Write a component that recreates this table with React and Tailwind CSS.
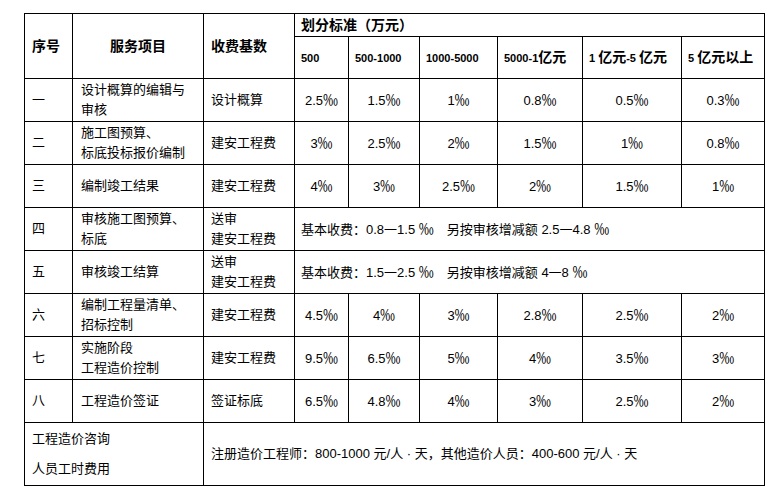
const cols = [48, 131, 91, 54, 71, 78, 85, 99, 83];

const rows = [
  { no: "一", item: ["设计概算的编辑与", "审核"], base: ["设计概算"], rates: ["2.5‰", "1.5‰", "1‰", "0.8‰", "0.5‰", "0.3‰"] },
  { no: "二", item: ["施工图预算、", "标底投标报价编制"], base: ["建安工程费"], rates: ["3‰", "2.5‰", "2‰", "1.5‰", "1‰", "0.8‰"] },
  { no: "三", item: ["编制竣工结果"], base: ["建安工程费"], rates: ["4‰", "3‰", "2.5‰", "2‰", "1.5‰", "1‰"] },
  { no: "四", item: ["审核施工图预算、", "标底"], base: ["送审", "建安工程费"], note: "基本收费：0.8一1.5 ‰\u3000另按审核增减额 2.5一4.8 ‰" },
  { no: "五", item: ["审核竣工结算"], base: ["送审", "建安工程费"], note: "基本收费：1.5一2.5 ‰\u3000另按审核增减额 4一8 ‰" },
  { no: "六", item: ["编制工程量清单、", "招标控制"], base: ["建安工程费"], rates: ["4.5‰", "4‰", "3‰", "2.8‰", "2.5‰", "2‰"] },
  { no: "七", item: ["实施阶段", "工程造价控制"], base: ["建安工程费"], rates: ["9.5‰", "6.5‰", "5‰", "4‰", "3.5‰", "3‰"] },
  { no: "八", item: ["工程造价签证"], base: ["签证标底"], rates: ["6.5‰", "4.8‰", "4‰", "3‰", "2.5‰", "2‰"] },
];

// header ranges: digits small, CJK larger
const ranges = [
  [["500", false]],
  [["500-1000", false]],
  [["1000-5000", false]],
  [["5000-1", false], ["亿元", true]],
  [["1 ", false], ["亿元", true], ["-5 ", false], ["亿元", true]],
  [["5 ", false], ["亿元以上", true]],
];

const font = { fontFamily: '"Liberation Sans", "Noto Sans CJK SC", sans-serif' };

// render ‰ larger, as in the reference
const Permil = ({ text }) =>
  text.split("‰").map((part, i, arr) => (
    <span key={i}>
      {part}
      {i < arr.length - 1 && (
        <span className="text-[15px] leading-[20px]" style={{ fontFamily: '"Noto Sans CJK SC", sans-serif' }}>
          ‰
        </span>
      )}
    </span>
  ));

const App = () => {
  return (
    <div className="w-[779px] h-[503px] bg-white pt-[13px] pl-[24px] text-black" style={font}>
      <table className="table-fixed border-collapse w-[741px] text-[13px] leading-[20px]">
        <colgroup>
          {cols.map((w, i) => (
            <col key={i} style={{ width: w }} />
          ))}
        </colgroup>
        <thead>
          <tr className="h-[23px]">
            <th rowSpan={2} className="border border-black text-left pl-[7px] text-[14px] font-bold align-middle">
              序号
            </th>
            <th rowSpan={2} className="border border-black text-center text-[14px] font-bold align-middle">
              服务项目
            </th>
            <th rowSpan={2} className="border border-black text-left pl-[7px] text-[14px] font-bold align-middle">
              收费基数
            </th>
            <th colSpan={6} className="border border-black text-left pl-[6px] text-[14px] font-bold">
              划分标准（万元）
            </th>
          </tr>
          <tr className="h-[42px]">
            {ranges.map((r, i) => (
              <th key={i} className="border border-black text-left pl-[6px] text-[11px] font-bold whitespace-pre">
                {r.map(([t, cjk], j) => (
                  <span key={j} className={cjk ? "text-[14px]" : ""}>
                    {t}
                  </span>
                ))}
              </th>
            ))}
          </tr>
        </thead>
        <tbody>
          {rows.map((row) => (
            <tr key={row.no} className="h-[43px]">
              <td className="border border-black pl-[7px] align-middle">{row.no}</td>
              <td className="border border-black pl-[8px] align-middle">
                {row.item.map((t) => (
                  <div key={t}>{t}</div>
                ))}
              </td>
              <td className="border border-black pl-[7px] align-middle">
                {row.base.map((t) => (
                  <div key={t}>{t}</div>
                ))}
              </td>
              {row.rates ? (
                row.rates.map((r, i) => (
                  <td key={i} className="border border-black text-center align-middle">
                    <Permil text={r} />
                  </td>
                ))
              ) : (
                <td colSpan={6} className="border border-black pl-[6px] align-middle whitespace-pre">
                  <Permil text={row.note} />
                </td>
              )}
            </tr>
          ))}
          <tr className="h-[63px]">
            <td colSpan={2} className="border border-black pl-[7px] align-middle leading-[30px]">
              <div>工程造价咨询</div>
              <div>人员工时费用</div>
            </td>
            <td colSpan={7} className="border border-black pl-[7px] align-middle">
              注册造价工程师：800-1000 元/人 · 天，其他造价人员：400-600 元/人 · 天
            </td>
          </tr>
        </tbody>
      </table>
    </div>
  );
};

export default App;
